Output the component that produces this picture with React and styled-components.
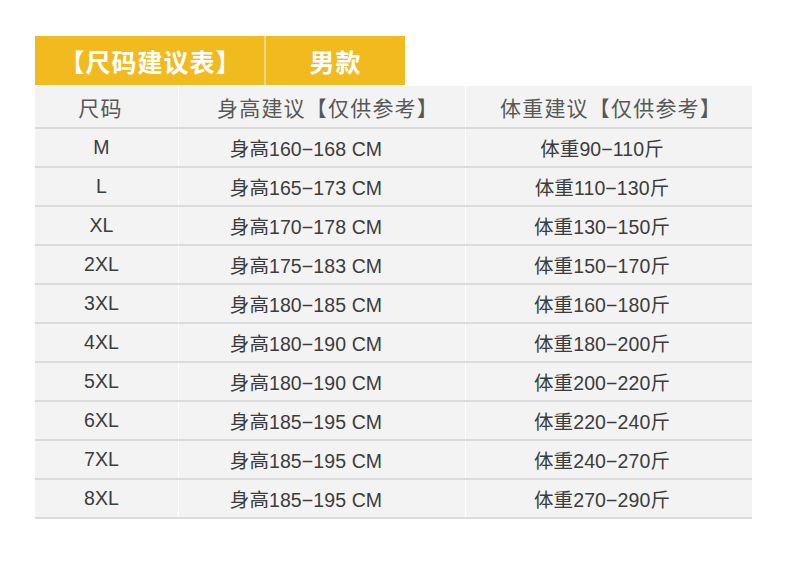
import styled, { createGlobalStyle } from 'styled-components';

const GlobalStyle = createGlobalStyle`
  html, body {
    margin: 0;
    padding: 0;
    background: #fff;
  }
  body {
    font-family: "Liberation Sans", "Noto Sans CJK SC", sans-serif;
  }
`;

const Page = styled.div`
  width: 790px;
  height: 562px;
  padding: 36px 0 0 35px;
  box-sizing: border-box;
  background: #fff;
`;

const Banner = styled.div`
  display: grid;
  grid-template-columns: 229px 139px;
  column-gap: 2px;
  width: 370px;
  height: 49px;
  background: #f6d77e;
`;

const BannerCell = styled.div`
  display: flex;
  align-items: center;
  justify-content: center;
  background: #f1bb1f;
  color: #fff;
  font-family: "Noto Sans CJK SC", sans-serif;
  font-weight: 700;
  font-size: 25px;
  letter-spacing: 1px;
  padding-left: ${({ $pad }) => $pad || 0}px;
`;

const Table = styled.div`
  width: 717px;
  margin-top: 1px;
`;

const Row = styled.div`
  display: grid;
  grid-template-columns: 143px 286px 286px;
  column-gap: 1px;
  background: #fff;
  height: ${({ $head }) => ($head ? '41px' : '37px')};
  border-bottom: 2px solid #dbdbdb;
`;

// $shift moves the text off centre: negative = to the left, positive = to the right
const Cell = styled.div`
  display: flex;
  align-items: center;
  justify-content: center;
  background: #f3f3f3;
  color: ${({ $head }) => ($head ? '#585858' : '#3c3c3c')};
  font-size: ${({ $head }) => ($head ? '21px' : '19.5px')};
  letter-spacing: ${({ $head }) => ($head ? '1.2px' : '0.1px')};
  padding-left: ${({ $shift = 0 }) => Math.max($shift, 0) * 2}px;
  padding-right: ${({ $shift = 0 }) => Math.max(-$shift, 0) * 2}px;
  box-sizing: border-box;
  white-space: nowrap;
`;

const rows = [
  ['M', '160-168', '90-110'],
  ['L', '165-173', '110-130'],
  ['XL', '170-178', '130-150'],
  ['2XL', '175-183', '150-170'],
  ['3XL', '180-185', '160-180'],
  ['4XL', '180-190', '180-200'],
  ['5XL', '180-190', '200-220'],
  ['6XL', '185-195', '220-240'],
  ['7XL', '185-195', '240-270'],
  ['8XL', '185-195', '270-290'],
];

export default function App() {
  return (
    <>
      <GlobalStyle />
      <Page>
        <Banner>
          <BannerCell $pad={2}>【尺码建议表】</BannerCell>
          <BannerCell>男款</BannerCell>
        </Banner>
        <Table>
          <Row $head>
            <Cell $head $shift={-6}>尺码</Cell>
            <Cell $head $shift={6}>身高建议【仅供参考】</Cell>
            <Cell $head $shift={2}>体重建议【仅供参考】</Cell>
          </Row>
          {rows.map(([size, height, weight]) => (
            <Row key={size}>
              <Cell $shift={-5}>{size}</Cell>
              <Cell $shift={-16}>身高{height.replace('-', '−')} CM</Cell>
              <Cell $shift={-7}>体重{weight.replace('-', '−')}斤</Cell>
            </Row>
          ))}
        </Table>
      </Page>
    </>
  );
}
